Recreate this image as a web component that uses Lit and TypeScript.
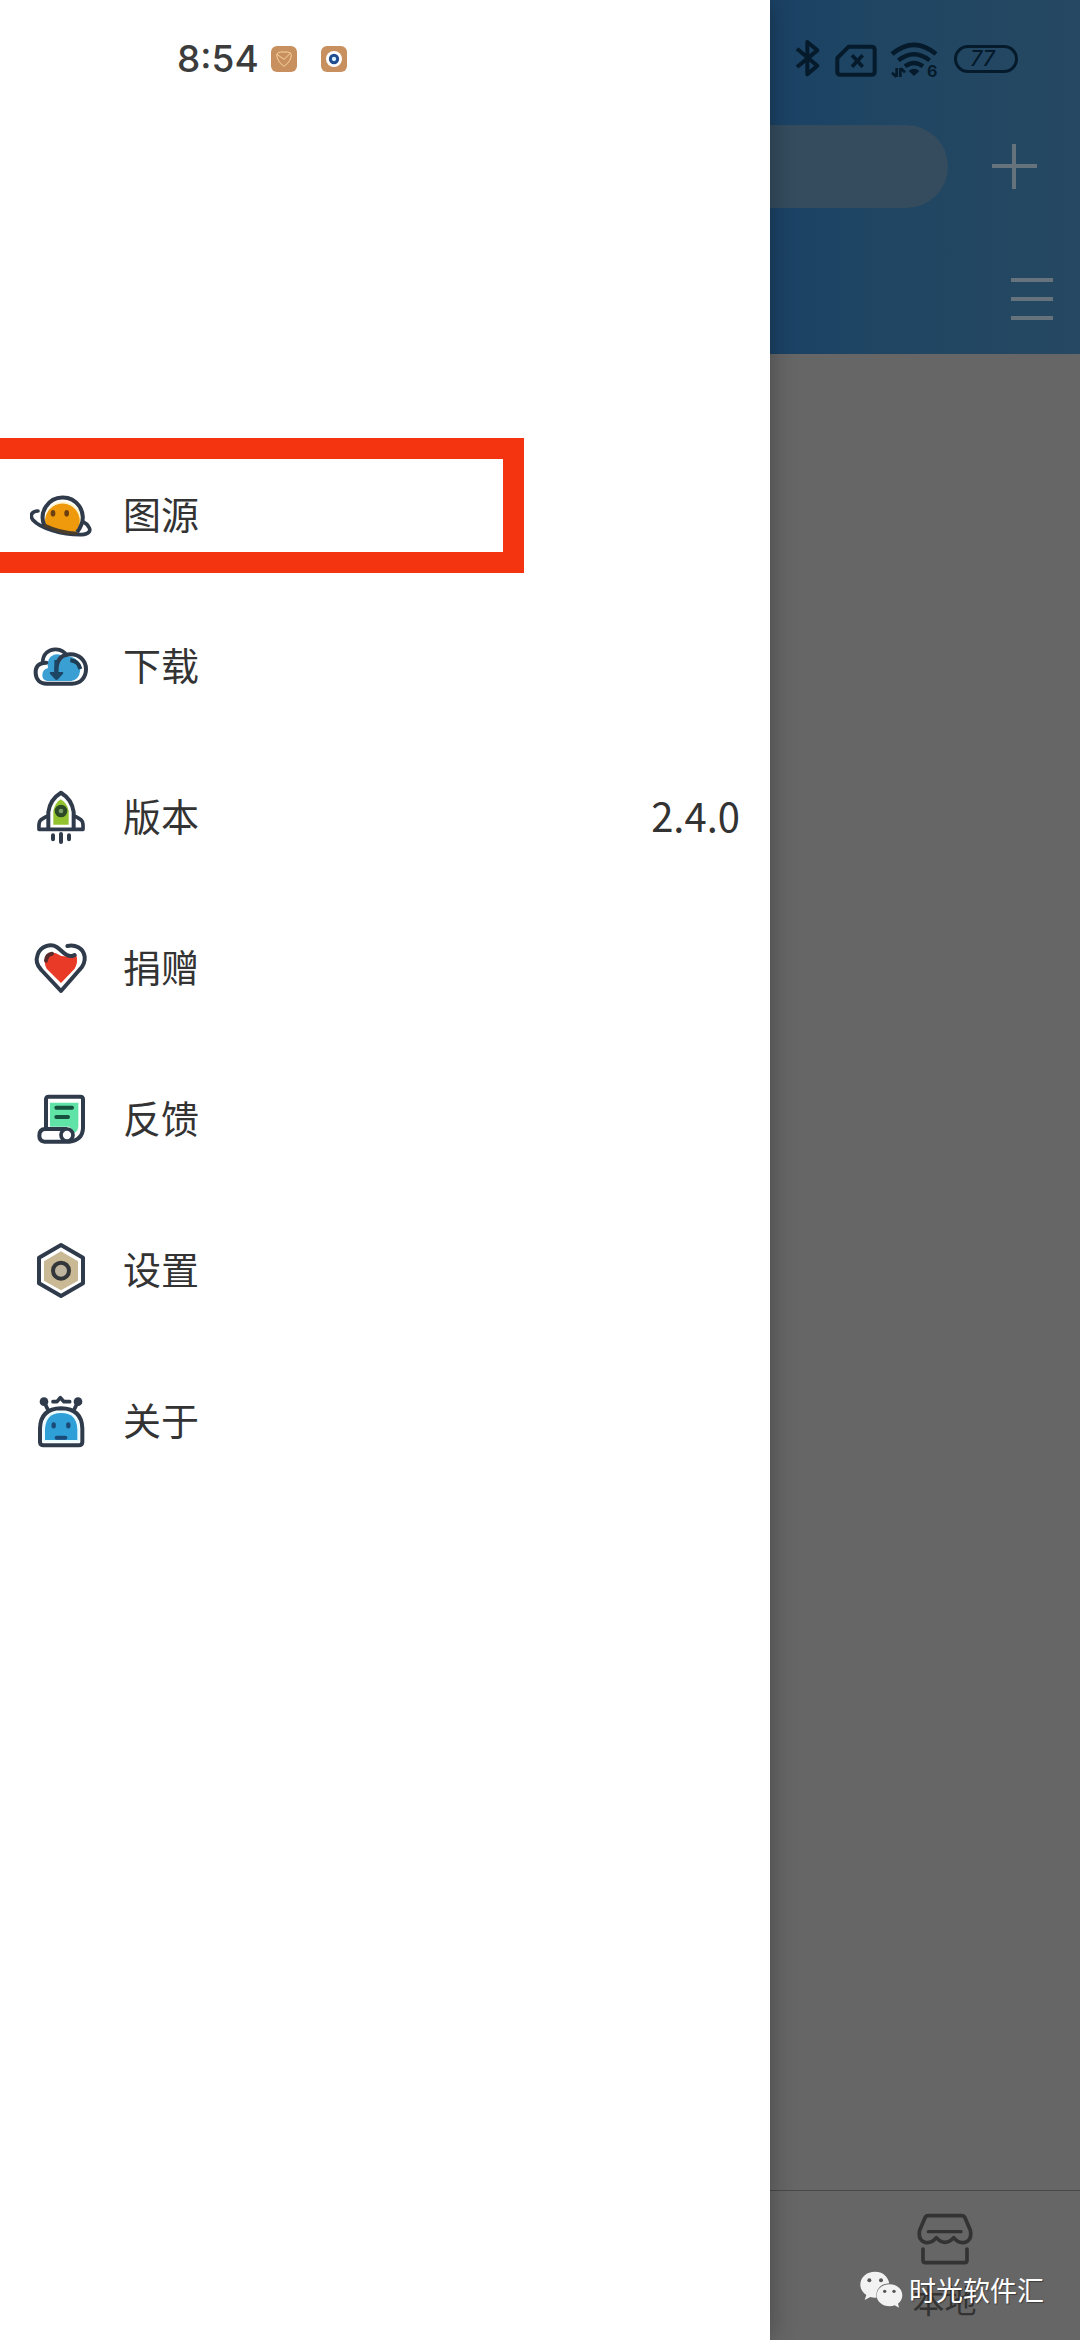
import { LitElement, html, css, svg, nothing, type SVGTemplateResult } from "lit";
import { customElement } from "lit/decorators.js";

const INK = "#2f3b4b";

interface MenuEntry {
  label: string;
  viewBox: string;
  art: SVGTemplateResult;
  value?: string;
  marked?: boolean;
}

const planet = svg`
  <path d="M76 160 A55 55 0 1 1 182 164 L174 184 Q115 182 76 160Z" fill="#fff6cf"/>
  <path d="M77 164 A52 52 0 1 1 177 166 Q171 178 166 184 Q115 184 77 164Z" fill="#ee9a0c"/>
  <path d="M73 164 A60 60 0 1 1 184 162 Q180 174 171 185" fill="none" stroke=${INK} stroke-width="12"/>
  <path d="M54 121 C36 121 28 134 39 148 C60 172 125 193 185 192 C208 190 213 180 207 170 C203 162 197 157 190 154" fill="none" stroke=${INK} stroke-width="11" stroke-linecap="round"/>
  <path d="M72 163 Q120 187 172 188" fill="none" stroke="#4a3d2c" stroke-width="10"/>
  <ellipse cx="99" cy="128" rx="7" ry="10" fill="#6b3f10"/>
  <ellipse cx="140" cy="128" rx="7" ry="10" fill="#6b3f10"/>`;

const cloud = svg`
  <path d="M82 181 Q66 178 67 162 Q68 146 84 142 Q80 120 92 108 Q112 94 130 108 Q148 102 166 114 Q186 128 180 152 Q178 176 154 181Z" fill="#3a9fd3"/>
  <path d="M79 126 C52 126 46 142 47 158 C48 176 60 189 80 189 H156 C184 189 198 168 198 146 C198 118 176 101 152 101 C124 101 109 118 109 152" fill="none" stroke=${INK} stroke-width="12" stroke-linecap="round"/>
  <path d="M68 126 C68 100 86 85 108 86 C124 87 134 94 139 103" fill="none" stroke=${INK} stroke-width="11" stroke-linecap="round"/>
  <path d="M151 119 Q176 121 181 145" fill="none" stroke="#1f3d52" stroke-width="12"/>
  <path d="M109 118 V160" fill="none" stroke="#1d4664" stroke-width="12"/>
  <path d="M91 154 H128 Q131 156 129 159 L114 176 Q109 180 105 176 L90 159 Q88 156 91 154Z" fill="#1d4664"/>`;

const rocket = svg`
  <path d="M100 162 V120 Q106 96 122 86 Q140 96 146 120 V162Z" fill="#93c42f"/>
  <path d="M85 175 V124 Q90 86 123 66 Q156 86 161 124 V175" fill="none" stroke=${INK} stroke-width="12" stroke-linejoin="round"/>
  <path d="M84 136 Q66 143 60 151 Q56 157 57 176 H189 Q190 157 186 151 Q180 143 162 136" fill="none" stroke=${INK} stroke-width="11" stroke-linejoin="round"/>
  <circle cx="123" cy="121" r="13" fill="#7f9c6b" stroke="#2b4a25" stroke-width="12"/>
  <path d="M99 194 V206 M123 190 V214 M147 194 V206" stroke=${INK} stroke-width="12" stroke-linecap="round"/>`;

const heart = svg`
  <path d="M123 187 L80 144 Q70 126 78 110 Q90 92 108 98 L124 106 L150 108 L168 100 Q176 124 164 144Z" fill="#e83a26"/>
  <path d="M142 76 C164 70 190 82 194 108 C196 126 188 138 178 148 L123 211 L64 148 C50 134 47 118 53 102 C62 76 92 68 110 79 C128 90 134 106 152 106 Q158 107 164 103" fill="none" stroke=${INK} stroke-width="12" stroke-linecap="round" stroke-linejoin="round"/>
  <path d="M78 120 Q79 102 96 99" fill="none" stroke="#5a2b2b" stroke-width="12" stroke-linecap="round"/>`;

const scroll = svg`
  <path d="M90 96 H175 V168 Q172 188 154 188 L150 168 H90Z" fill="#5fe3a6"/>
  <path d="M78 172 V86 Q78 78 86 78 H181 Q189 78 189 86 V172 Q188 208 148 213 H72 Q58 210 58 195 Q58 175 76 175 H141" fill="none" stroke=${INK} stroke-width="12" stroke-linejoin="round"/>
  <circle cx="141" cy="193" r="18" fill="#fff" stroke=${INK} stroke-width="11"/>
  <path d="M109 111 H156 M109 139 H144" stroke="#16503f" stroke-width="12" stroke-linecap="round"/>`;

const hexagon = svg`
  <path d="M123 92 L174 122 V180 L123 209 L72 180 V122Z" fill="#c9b995"/>
  <path d="M123 73 L189 111 V188 L123 226 L57 188 V111Z" fill="none" stroke=${INK} stroke-width="12" stroke-linejoin="round"/>
  <circle cx="123" cy="150" r="24" fill="#bfb49e" stroke="#343739" stroke-width="12"/>`;

const robot = svg`
  <path d="M68 200 V160 Q70 106 123 106 Q178 106 179 160 V200Z" fill="#e9fbff"/>
  <path d="M75 193 V160 Q78 112 123 112 Q170 112 172 160 V193Z" fill="#2f9fd8"/>
  <path d="M60 200 V158 Q62 99 123 98 Q185 99 187 158 V200 Q186 209 177 209 H70 Q61 209 60 200Z" fill="none" stroke=${INK} stroke-width="12"/>
  <path d="M73 80 L85 105 M173 80 L161 105" stroke=${INK} stroke-width="11"/>
  <circle cx="72" cy="78" r="13" fill=${INK}/>
  <circle cx="174" cy="78" r="13" fill=${INK}/>
  <path d="M99 78 H111 L121 66 L132 78 H149" fill="none" stroke=${INK} stroke-width="11" stroke-linecap="round" stroke-linejoin="round"/>
  <path d="M101 146 V152 M145 146 V152" stroke="#1b4a78" stroke-width="13" stroke-linecap="round"/>
  <path d="M110 186 H136" stroke="#1b4a78" stroke-width="12" stroke-linecap="round"/>`;

const MENU: MenuEntry[] = [
  { label: "图源", viewBox: "30 43 186 186", art: planet, marked: true },
  { label: "下载", viewBox: "30 46 186 186", art: cloud },
  { label: "版本", viewBox: "30 49 186 186", art: rocket, value: "2.4.0" },
  { label: "捐赠", viewBox: "30 52 186 186", art: heart },
  { label: "反馈", viewBox: "30 55 186 186", art: scroll },
  { label: "设置", viewBox: "30 58 186 186", art: hexagon },
  { label: "关于", viewBox: "30 46 186 186", art: robot },
];

@customElement("side-menu")
class SideMenu extends LitElement {
  static styles = css`
    :host {
      display: flex;
      flex-direction: column;
      background: #fff;
      box-shadow: 0 0 24px rgba(0, 0, 0, 0.3);
      color: #333;
    }
    .status {
      display: flex;
      align-items: center;
      height: 118px;
      padding-left: 177px;
      gap: 12px;
    }
    .time {
      font: 500 37px/48px Inter, Roboto, sans-serif;
      color: #3c3c3c;
    }
    .chips {
      display: flex;
      gap: 24px;
    }
    .chip {
      display: block;
      width: 26px;
      height: 26px;
    }
    .list {
      list-style: none;
      margin: 0;
      padding: 322px 0 0;
    }
    .row {
      position: relative;
    }
    .mark {
      position: absolute;
      top: -2px;
      left: 0;
      width: 68%;
      height: 135px;
      box-sizing: border-box;
      border: 21px solid #f43411;
      border-left: 0;
      pointer-events: none;
    }
    .item {
      display: flex;
      align-items: center;
      gap: 31px;
      width: 100%;
      height: 151px;
      padding: 0 30px;
      border: 0;
      background: none;
      color: inherit;
      font: 400 38px/56px "Noto Sans CJK SC", sans-serif;
      text-align: left;
    }
    .icon {
      flex: none;
      width: 62px;
      height: 62px;
    }
    .label,
    .value {
      padding-bottom: 6px;
    }
    .value {
      margin-left: auto;
      font-size: 40px;
    }
  `;

  render() {
    return html`
      <div class="status">
        <span class="time">8:54</span>
        <span class="chips">
          <svg class="chip" viewBox="0 0 78 78" aria-hidden="true">
            <rect width="78" height="78" rx="18" fill="#c8905f"/>
            <path d="M17 25 Q20 19 28 18 H50 Q58 19 61 25 Q61 46 39 61 Q18 46 17 25Z M18 25 L39 40 L60 20" fill="none" stroke="#f8d39c" stroke-width="3"/>
          </svg>
          <svg class="chip" viewBox="0 0 78 78" aria-hidden="true">
            <rect width="78" height="78" rx="18" fill="#c8905f"/>
            <circle cx="39" cy="39" r="24" fill="#fff"/>
            <circle cx="39" cy="39" r="11" fill="#d9f3ff" stroke="#1f4d90" stroke-width="9"/>
          </svg>
        </span>
      </div>
      <nav>
        <ul class="list">
          ${MENU.map(
            (m) => html`<li class="row">
              <button class="item" type="button">
                <svg class="icon" viewBox=${m.viewBox} aria-hidden="true">${m.art}</svg>
                <span class="label">${m.label}</span>
                ${m.value ? html`<span class="value">${m.value}</span>` : nothing}
              </button>
              ${m.marked ? html`<span class="mark"></span>` : nothing}
            </li>`
          )}
        </ul>
      </nav>
    `;
  }
}

@customElement("dimmed-page")
class DimmedPage extends LitElement {
  static styles = css`
    :host {
      display: flex;
      flex-direction: column;
      background: #666;
      font-family: "Noto Sans CJK SC", sans-serif;
    }
    .header {
      height: 354px;
      background: linear-gradient(90deg, #1b4265, #204663 40%, #264862);
    }
    .status {
      display: flex;
      align-items: center;
      justify-content: flex-end;
      height: 118px;
      padding-right: 62px;
      color: #051a2b;
    }
    .signals {
      flex: none;
      width: 142px;
      height: 40px;
      margin-right: 16px;
      overflow: visible;
    }
    .battery {
      flex: none;
      box-sizing: border-box;
      width: 64px;
      height: 28px;
      padding-right: 7px;
      border: 3px solid #051a2b;
      border-radius: 14px;
      font: italic 500 21px/22px Inter, Roboto, sans-serif;
      text-align: center;
    }
    .search {
      display: flex;
      align-items: center;
      height: 96px;
    }
    .field {
      flex: 1;
      box-sizing: border-box;
      min-width: 0;
      height: 83px;
      padding: 0 40px;
      border: 0;
      border-radius: 0 42px 42px 0;
      background: #344c5e;
      color: #8c9196;
      font: inherit;
    }
    .plain {
      display: flex;
      align-items: center;
      justify-content: center;
      padding: 0;
      border: 0;
      background: none;
      color: #66727c;
    }
    .add {
      flex: none;
      width: 132px;
      height: 96px;
    }
    .tools {
      display: flex;
      justify-content: flex-end;
      padding: 64px 27px 0 0;
    }
    .glyph {
      display: block;
      width: 45px;
      height: 45px;
    }
    .lines {
      width: 42px;
      height: 42px;
    }
    .content {
      flex: 1;
    }
    .tabs {
      position: relative;
      height: 149px;
      border-top: 1px solid #464a48;
    }
    .tab {
      display: flex;
      flex-direction: column;
      align-items: center;
      gap: 10px;
      width: 100%;
      height: 100%;
      padding: 22px 0 0 39px;
      border: 0;
      background: none;
      color: #333;
      font: 400 32px/48px "Noto Sans CJK SC", sans-serif;
    }
    .store {
      width: 56px;
      height: 52px;
    }
    .credit {
      position: absolute;
      right: 36px;
      bottom: 30px;
      display: flex;
      align-items: center;
      gap: 6px;
      color: #fff;
      font-size: 27px;
      line-height: 40px;
      text-shadow: 1px 1px 1px rgba(0, 0, 0, 0.4);
      white-space: nowrap;
    }
    .bubbles {
      width: 43px;
      height: 38px;
    }
  `;

  render() {
    return html`
      <header class="header">
        <div class="status">
          <svg class="signals" viewBox="0 0 426 120" fill="none" stroke="currentColor" aria-hidden="true">
            <path d="M3 29 L64 80 L34 106 V9 L64 34 L3 84" stroke-width="12" stroke-linejoin="round"/>
            <path d="M158 23 H227 Q236 23 236 32 V98 Q236 107 227 107 H133 Q124 107 124 98 V57Z" stroke-width="12" stroke-linejoin="round"/>
            <path d="M168 49 L200 83 M200 49 L168 83" stroke-width="11"/>
            <path d="M288 45 Q354 -10 420 45" stroke-width="14"/>
            <path d="M307 64 Q354 27 401 64" stroke-width="13"/>
            <path d="M327 82 Q354 62 381 82" stroke-width="13"/>
            <path d="M338 96 Q354 83 370 96 L354 111Z" fill="currentColor" stroke="none"/>
            <path d="M302 87 V114 M288 101 L301 113 M313 114 V87 M327 100 L314 88" stroke-width="8"/>
            <text x="393" y="114" font-family="Inter, sans-serif" font-size="48" font-weight="700" fill="currentColor" stroke="none">6</text>
          </svg>
          <span class="battery">77</span>
        </div>
        <div class="search">
          <input class="field" type="search" aria-label="搜索">
          <button class="plain add" type="button" aria-label="添加">
            <svg class="glyph" viewBox="0 0 45 45" stroke="currentColor" stroke-width="4"><path d="M0 22 H45 M22 0 V45"/></svg>
          </button>
        </div>
        <div class="tools">
          <button class="plain" type="button" aria-label="列表">
            <svg class="glyph lines" viewBox="0 0 42 42" stroke="currentColor" stroke-width="4"><path d="M0 2 H42 M0 21 H42 M0 40 H42"/></svg>
          </button>
        </div>
      </header>
      <main class="content"></main>
      <footer class="tabs">
        <button class="tab" type="button">
          <svg class="store" viewBox="0 0 168 156" fill="none" stroke="#333" stroke-width="11" stroke-linecap="round" stroke-linejoin="round" aria-hidden="true">
            <path d="M34 8 H134 Q141 8 144 14 L160 52 Q166 80 144 88 Q124 92 110 74 Q98 88 84 88 Q70 88 58 74 Q44 92 24 88 Q2 80 8 52 L24 14 Q27 8 34 8Z"/>
            <path d="M34 56 H132" stroke-width="10"/>
            <path d="M18 108 V142 Q18 149 25 149 H143 Q150 149 150 142 V108"/>
          </svg>
          <span>本地</span>
        </button>
        <div class="credit">
          <svg class="bubbles" viewBox="0 0 129 114" aria-hidden="true">
            <path d="M45 2 C20 2 1 18 1 41 C1 54 8 65 19 72 L14 87 L31 78 Q40 81 50 80 C45 56 62 38 88 37 C84 16 68 2 45 2Z" fill="#f2f2f2"/>
            <path d="M89 40 C66 40 50 54 50 73 C50 92 67 106 89 106 Q97 106 104 103 L117 110 L114 98 C122 92 127 83 127 73 C127 54 111 40 89 40Z" fill="#f2f2f2"/>
            <circle cx="28" cy="28" r="6" fill="#555"/><circle cx="63" cy="28" r="6" fill="#555"/>
            <circle cx="74" cy="61" r="5" fill="#555"/><circle cx="102" cy="61" r="5" fill="#555"/>
          </svg>
          <span>时光软件汇</span>
        </div>
      </footer>
    `;
  }
}

@customElement("app-root")
class AppRoot extends LitElement {
  static styles = css`
    :host {
      display: grid;
      grid-template-columns: minmax(0, 77fr) minmax(0, 31fr);
      min-height: 100vh;
      overflow: hidden;
    }
    .drawer {
      z-index: 1;
    }
  `;

  render() {
    return html`
      <side-menu class="drawer"></side-menu>
      <dimmed-page></dimmed-page>
    `;
  }
}
